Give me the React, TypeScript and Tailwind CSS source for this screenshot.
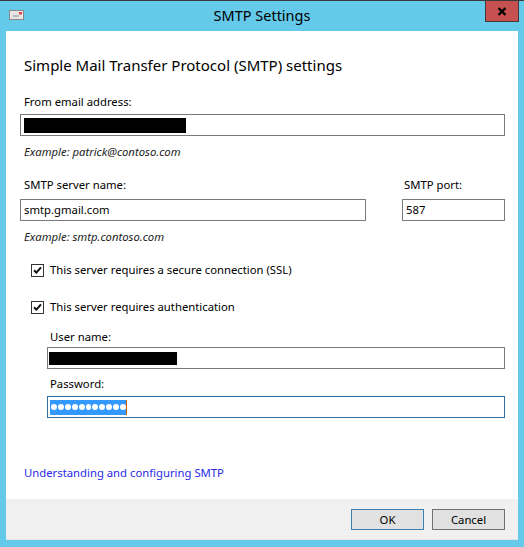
import React from 'react';

const font = { fontFamily: '"Segoe UI", "Noto Sans", "Open Sans", sans-serif' };

const Check = () => (
    <div className="w-[13px] h-[13px] border border-[#333333] bg-white flex items-center justify-center shrink-0">
        <svg width="9" height="8" viewBox="0 0 9 8">
            <path d="M1 4.2 L3.4 6.6 L8 1.4" stroke="#111" strokeWidth="2" fill="none" />
        </svg>
    </div>
);

const Field = ({ className = '', children }: { className?: string; children?: React.ReactNode }) => (
    <div className={`h-[22px] border border-[#7a7a7a] bg-white flex items-center px-[3px] text-black ${className}`}>
        {children}
    </div>
);

export default function App() {
    return (
        <div style={font} className="w-[524px] h-[547px] bg-[#65c9e9] border-t border-[#3a3a3a] flex flex-col">
            {/* title bar */}
            <div className="h-[30px] grid grid-cols-[1fr_auto_1fr] items-start shrink-0">
                <div className="pt-[9px] pl-[9px]">
                    <svg width="15" height="10" viewBox="0 0 15 10">
                        <rect x="0.5" y="0.5" width="14" height="9" fill="#e6e6e6" stroke="#8a8a8a" />
                        <rect x="10" y="2" width="3" height="2.5" fill="#e04040" />
                        <rect x="4" y="5.5" width="6" height="1" fill="#8a8a8a" />
                    </svg>
                </div>
                <div className="text-[14.5px] leading-[20px] text-black pt-[4px]">SMTP Settings</div>
                <div className="flex justify-end pr-[5px]">
                    <div className="w-[34px] h-[21px] bg-[#c75050] border border-t-0 border-[#3c3c3c] flex items-center justify-center">
                        <svg width="10" height="9" viewBox="0 0 10 9">
                            <path d="M1.5 1 L8.5 8 M8.5 1 L1.5 8" stroke="#000" strokeWidth="2.4" />
                        </svg>
                    </div>
                </div>
            </div>

            {/* body */}
            <div className="mx-[6px] flex-1 flex flex-col bg-white">
                <div className="flex-1 pl-[18px] pr-[13px] text-[11.3px] leading-[16px] text-black">
                    <div className="mt-[24px] text-[15px] leading-[20px]">Simple Mail Transfer Protocol (SMTP) settings</div>

                    <div className="mt-[19px]">From email address:</div>
                    <Field className="mt-[4px] -ml-[4px]">
                        <div className="w-[162px] h-[15px] bg-black" />
                    </Field>
                    <div className="mt-[8px] italic text-[#222]">Example: patrick@contoso.com</div>

                    <div className="mt-[17px] flex justify-between -ml-[4px]">
                        <div>
                            <div className="pl-[4px]">SMTP server name:</div>
                            <Field className="mt-[6px] w-[346px]">smtp.gmail.com</Field>
                        </div>
                        <div className="w-[103px]">
                            <div className="pl-[2px]">SMTP port:</div>
                            <Field className="mt-[6px]">587</Field>
                        </div>
                    </div>
                    <div className="mt-[8px] italic text-[#222]">Example: smtp.contoso.com</div>

                    <div className="mt-[17px] flex items-center gap-[6px] pl-[7px]">
                        <Check />
                        <span>This server requires a secure connection (SSL)</span>
                    </div>
                    <div className="mt-[21px] flex items-center gap-[6px] pl-[7px]">
                        <Check />
                        <span>This server requires authentication</span>
                    </div>

                    <div className="pl-[23px]">
                        <div className="mt-[14px] pl-[3px]">User name:</div>
                        <Field className="mt-[2px] px-0 pl-[1px]">
                            <div className="w-[128px] h-[13px] bg-black" />
                        </Field>
                        <div className="mt-[7px] pl-[3px]">Password:</div>
                        <div className="mt-[4px] h-[22px] border border-[#2f6fa3] bg-white flex items-center pl-[2px]">
                            <div className="h-[15px] w-[77px] bg-[#3399ff] flex items-center gap-[1px] pl-[1px] border-r border-[#d06000]">
                                {Array.from({ length: 11 }).map((_, i) => (
                                    <div key={i} className="w-[6px] h-[6px] rounded-full bg-white" />
                                ))}
                            </div>
                        </div>
                    </div>

                    <div className="mt-[47px] text-[#2a2ae8]">Understanding and configuring SMTP</div>
                </div>

                {/* footer */}
                <div className="h-[41px] bg-[#f0f0f0] border-b border-[#e4e4e4] flex items-start justify-end gap-[8px] pt-[10px] pr-[13px] text-[11.3px] text-black">
                    <button className="w-[73px] h-[21px] bg-[#e1e1e1] border border-[#3c7fb1] leading-[19px]">OK</button>
                    <button className="w-[73px] h-[21px] bg-[#e1e1e1] border border-[#707070] leading-[19px]">Cancel</button>
                </div>
            </div>
            <div className="h-[7px] shrink-0" />
        </div>
    );
}
